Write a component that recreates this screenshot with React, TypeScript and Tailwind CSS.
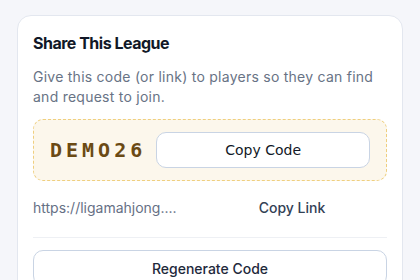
import React from "react";

export default function App() {
  return (
    <div className="w-[420px] h-[280px] overflow-hidden bg-[#f5f6fa] pt-[15px] px-[17px]" style={{ fontFamily: "Inter, 'Noto Sans', sans-serif" }}>
      <div className="bg-white border border-[#e3e7ef] rounded-[14px] px-[15px] pt-[15px] pb-4 flex flex-col">
        <h2 className="text-[16px] leading-6 font-bold text-[#111827] tracking-[-0.5px]">Share This League</h2>
        <p className="mt-3 text-[14px] leading-5 text-[#687385] tracking-[0.25px]">
          Give this code (or link) to players so they can find and request to join.
        </p>
        <div className="mt-3 flex items-center gap-[10px] rounded-[10px] border border-dashed border-[#efcf7f] bg-[#fcf7ec] pl-4 pr-4 py-3">
          <span className="text-[20px] font-bold tracking-[4px] text-[#6b4a14]" style={{ fontFamily: "'DejaVu Sans Mono', monospace" }}>DEMO26</span>
          <button className="flex-1 h-9 rounded-[10px] border border-[#c9d4e4] bg-white text-[14px] text-[#111827]" style={{ fontFamily: "'DejaVu Sans', sans-serif" }}>Copy Code</button>
        </div>
        <div className="mt-2 flex items-center h-9">
          <span className="flex-1 min-w-0 truncate text-[14px] text-[#667085]">https://ligamahjong....</span>
          <button className="w-[190px] h-9 text-[14px] font-medium text-[#334155]">Copy Link</button>
        </div>
        <div className="mt-3 border-t border-[#eef0f4]" />
        <button className="mt-3 h-9 rounded-[10px] border border-[#c9d4e4] bg-white text-[14px] font-medium text-[#1e293b]">Regenerate Code</button>
      </div>
    </div>
  );
}
